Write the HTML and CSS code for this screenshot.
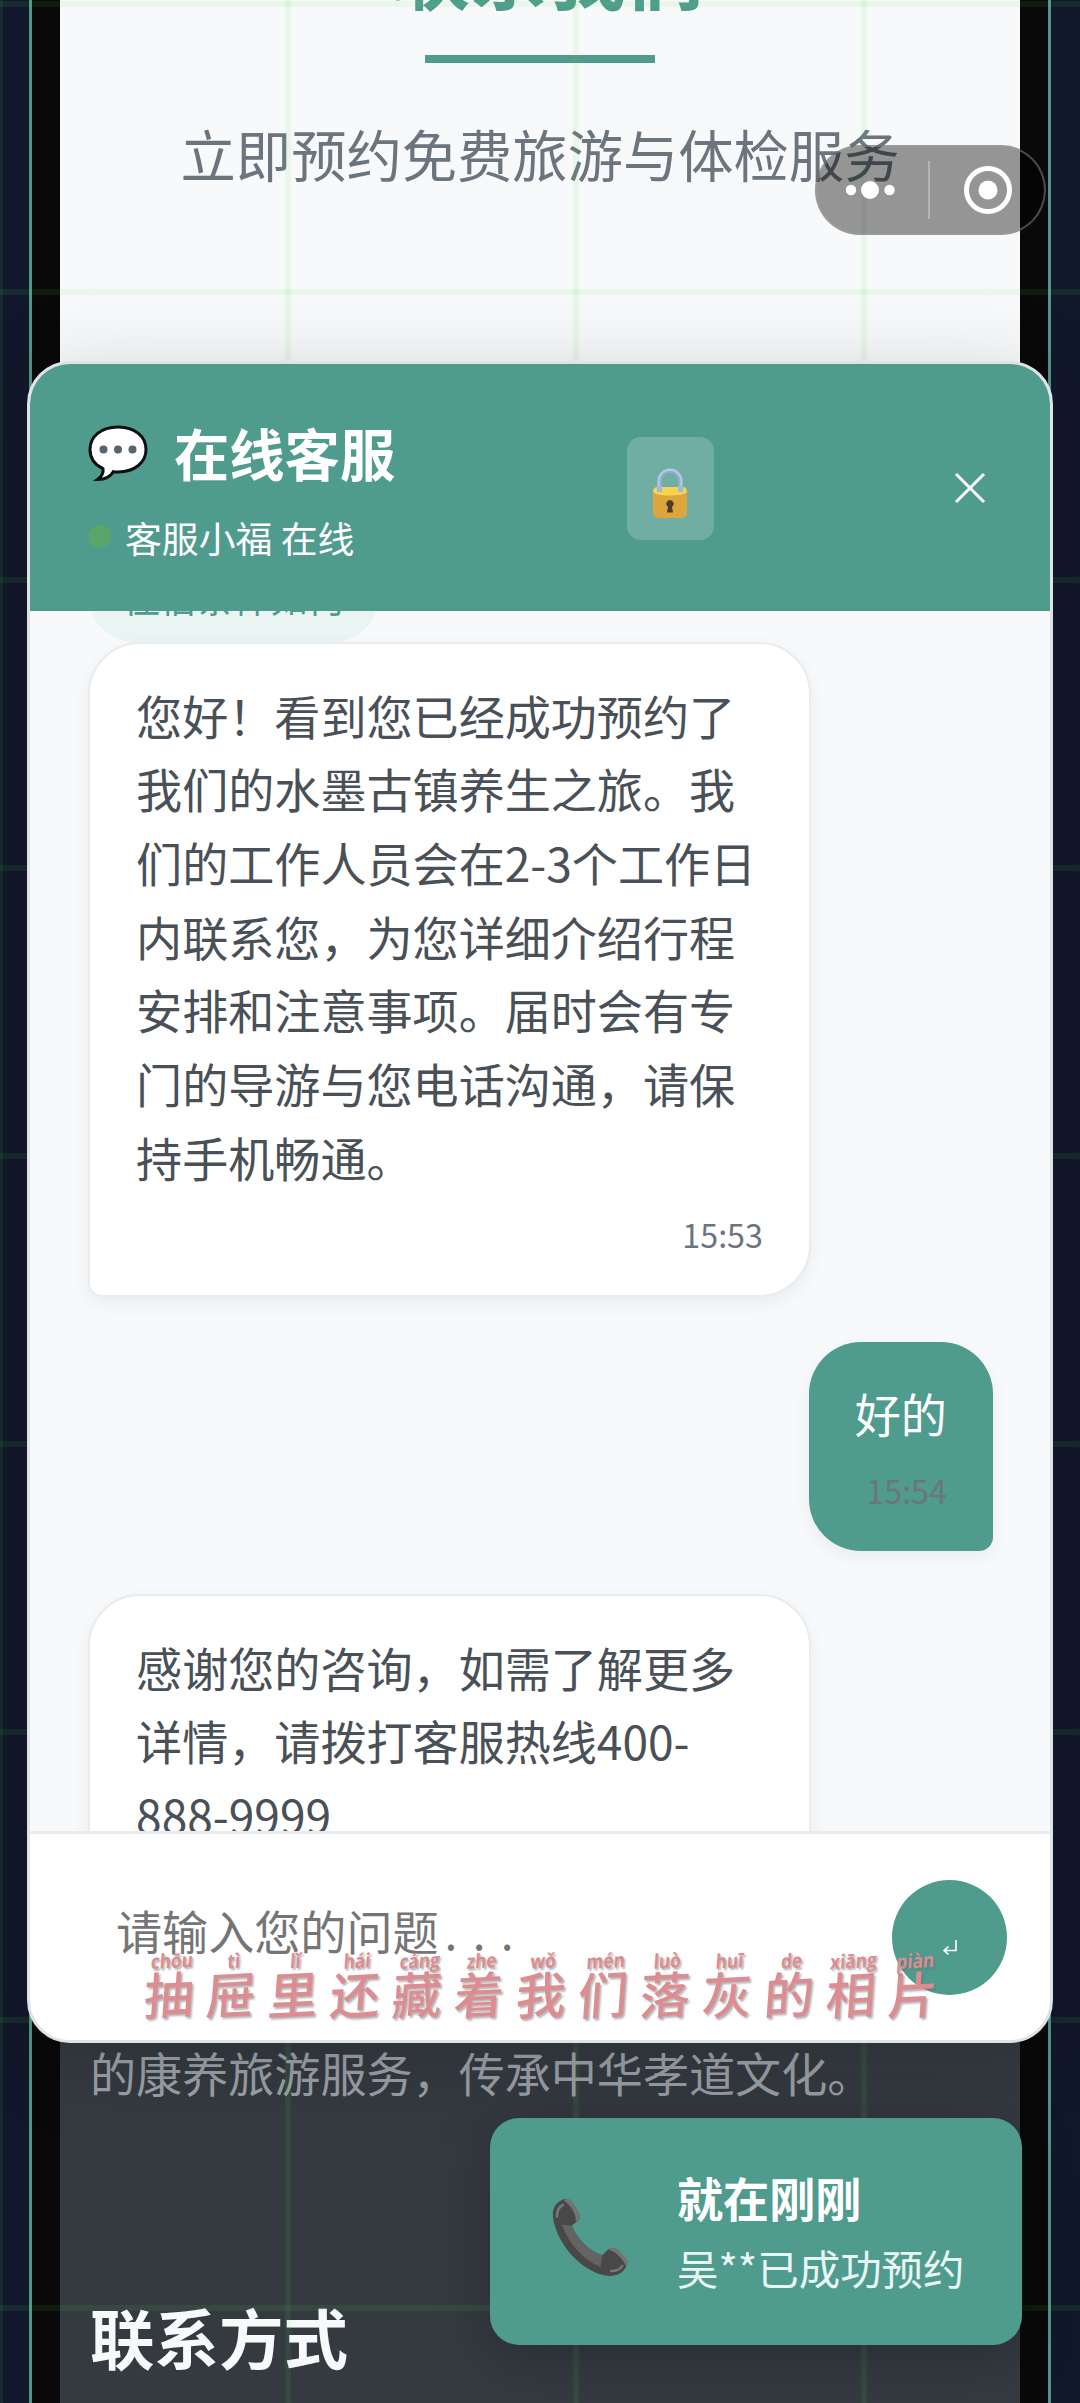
FILE: index.html
```html
<!DOCTYPE html>
<html lang="zh-CN">
<head>
<meta charset="utf-8">
<title>在线客服</title>
<link rel="stylesheet" href="styles.css">
</head>
<body>
<div class="page">
  <main class="content">
    <section class="contact">
      <h2 class="contact-title">联系我们</h2>
      <div class="contact-rule"></div>
      <p class="contact-sub">立即预约免费旅游与体检服务</p>
    </section>
    <footer class="footer">
      <p class="footer-text">的康养旅游服务，传承中华孝道文化。</p>
      <h3 class="footer-title">联系方式</h3>
    </footer>
  </main>
</div>
<div class="grid-lines"></div>

<section class="chat">
  <header class="chat-header">
    <div class="chat-info">
      <div class="chat-title">
        <svg class="icon-bubble" viewBox="0 0 60 58"><path d="M30 2C13 2 2 11.500 2 24.500c0 8.500 4.800 15.300 13 19.200.8 4.300-1.800 8.100-5.500 10.800 8.200-.2 13.200-3.200 15.800-7.800 1.500.2 3 .2 4.700.2C47 46.900 58 37.300 58 24.500 58 11.500 47 2 30 2z" fill="#fff" stroke="#0c0f10" stroke-width="3"/><circle cx="15.500" cy="24.500" r="4" fill="#58656d"/><circle cx="30" cy="24.500" r="4" fill="#58656d"/><circle cx="44.500" cy="24.500" r="4" fill="#58656d"/></svg>
        <span>在线客服</span>
      </div>
      <div class="chat-status"><i class="status-dot"></i><span>客服小福 在线</span></div>
    </div>
    <div class="lock-button">
      <svg class="icon-lock" viewBox="0 0 34 50"><path d="M6.500 24V13a10.500 10.500 0 0 1 21 0v11" fill="none" stroke="#8fb0cc" stroke-width="5"/><path d="M5.700 23V13a11.300 11.300 0 0 1 22.600 0v8" fill="none" stroke="#b3cde0" stroke-width="2"/><rect x="0" y="19" width="34" height="31" rx="5" fill="#dda63a"/><path d="M0 24q0-5 5-5h24q5 0 5 5-3 3.500-17 3.500T0 24z" fill="#f8d352"/><path d="M6.500 24v-6M27.500 24v-6" fill="none" stroke="#9dbbd2" stroke-width="5"/><path d="M17 32a3.700 3.700 0 0 1 2 6.800l1 5.700h-6l1-5.700a3.700 3.700 0 0 1 2-6.800z" fill="#4e3b2d"/></svg>
    </div>
    <svg class="icon-close" viewBox="0 0 32 32"><path d="M2 2l28 28M30 2L2 30" stroke="#fff" stroke-width="3" fill="none"/></svg>
  </header>
  <div class="chat-body">
    <div class="chip">住宿条件如何</div>
    <div class="message bot">
      <div>您好！看到您已经成功预约了我们的水墨古镇养生之旅。我们的工作人员会在2-3个工作日内联系您，为您详细介绍行程安排和注意事项。届时会有专门的导游与您电话沟通，请保持手机畅通。</div>
      <div class="time">15:53</div>
    </div>
    <div class="message user">
      <div>好的</div>
      <div class="time">15:54</div>
    </div>
    <div class="message bot">
      <div>感谢您的咨询，如需了解更多详情，请拨打客服热线400-<br>888-9999</div>
    </div>
  </div>
  <div class="chat-input">
    <div class="placeholder">请输入您的问题<span class="dots">...</span></div>
    <div class="send"><svg class="icon-enter" viewBox="0 0 16 16"><path d="M14 0v10.500H3M6.500 6.500L2 10.500l4.500 4" fill="none" stroke="#fff" stroke-width="1.600"/></svg></div>
  </div>
</section>

<div class="toast">
  <svg class="icon-phone" viewBox="0 0 78 78"><path d="M10 1C2 5-1 12 2 24c6 23 24 44 46 52 12 4 22 2 27-7 2-3 2-6 0-8l-8-9c-3-3-7-3-10-1l-6 6C38 53 26 41 20 27l5-4c3-2 4-5 2-9L20 3c-2-3-6-4-10-2z" fill="#484848"/><path d="M10 26c8 20 20 34 39 43l2-12C38 53 26 41 20 27z" fill="#646464"/><path d="M12 1c4-2 7-1 9 3l6 10c2 4 1 7-3 9 1-8-5-16-12-22zM75 69c3-4 2-7 0-9l-8-8c-3-3-6-3-10-1 8 3 15 9 18 18z" fill="#747474"/><path d="M5 18C5 12 7 8 11 6M60 73c6 0 9-2 11-5" stroke="#777" stroke-width="2.500" fill="none" stroke-linecap="round"/></svg>
  <div>
    <div class="toast-title">就在刚刚</div>
    <div class="toast-text">吴**已成功预约</div>
  </div>
</div>

<div class="capsule">
  <svg class="capsule-icons" viewBox="0 0 231 90"><g fill="#fff"><circle cx="36" cy="45" r="5.200"/><circle cx="55" cy="45" r="9"/><circle cx="74.500" cy="45" r="5.200"/><circle cx="173" cy="45" r="9.500"/></g><path d="M114 16v58" stroke="#b5b5b5" stroke-width="2"/><circle cx="173" cy="45" r="21.500" fill="none" stroke="#fff" stroke-width="5"/></svg>
</div>

<div class="lyrics">
  <span><b>chōu</b>抽</span><span><b>tì</b>屉</span><span><b>lǐ</b>里</span><span><b>hái</b>还</span><span><b>cáng</b>藏</span><span><b>zhe</b>着</span><span><b>wǒ</b>我</span><span><b>mén</b>们</span><span><b>luò</b>落</span><span><b>huī</b>灰</span><span><b>de</b>的</span><span><b>xiāng</b>相</span><span><b>piàn</b>片</span>
</div>
</body>
</html>
```
FILE: styles.css
```css
* { box-sizing: border-box; margin: 0; padding: 0; }
body {
  position: relative;
  width: 1080px;
  height: 2403px;
  overflow: hidden;
  background: #12182b;
  font-family: "Noto Sans CJK SC", sans-serif;
  font-size: 46.08px;
  line-height: 1.6;
}
svg { display: block; flex: none; }
.page {
  height: 2403px;
  margin: 0 29px;
  padding: 0 28px;
  background: #080908;
  border: solid #529488;
  border-width: 0 3px;
}
.content {
  display: flex;
  flex-direction: column;
  height: 100%;
  background: #f8f9fa;
}
.contact { height: 1900px; text-align: center; }
.contact-title {
  display: flex;
  align-items: flex-end;
  justify-content: center;
  height: 55px;
  padding: 0 0 26px 16px;
  font-size: 77.76px;
  font-weight: 700;
  line-height: 118px;
  color: #4f9b8e;
}
.contact-rule { width: 230px; height: 8px; margin: 0 auto; background: #4f9b8e; }
.contact-sub { margin-top: 46px; font-size: 55.3px; color: #6c757d; }
.footer { flex: 1; padding: 136px 29px 0 30px; background: #343a40; }
.footer-text { color: #9a9fa6; white-space: nowrap; }
.footer-title { margin-top: 175px; font-size: 64.5px; font-weight: 700; color: #f8f9fa; }
.grid-lines {
  position: absolute;
  inset: 0;
  background-image:
    linear-gradient(to bottom, rgba(90,215,90,.09) 6px, transparent 6px),
    linear-gradient(to right, rgba(90,215,90,.09) 6px, transparent 6px);
  background-size: 288px 288px;
  background-position: 0 1px, -3px 0;
}

.chat {
  position: absolute;
  left: 27px;
  top: 361px;
  width: 1026px;
  height: 1682px;
  display: flex;
  flex-direction: column;
  overflow: hidden;
  background: #fff;
  border: 3px solid #dfe3e6;
  border-radius: 43px;
  box-shadow: 0 14px 86px rgba(0,0,0,.17);
}
.chat-header {
  height: 247px;
  flex: none;
  display: flex;
  align-items: center;
  justify-content: space-between;
  padding: 1px 64px 0 58px;
  background: #4f9b8e;
  color: #fff;
}
.chat-info { width: 303px; }
.chat-title { display: flex; align-items: center; gap: 26px; width: 340px; font-size: 55.3px; font-weight: 700; line-height: 88px; white-space: nowrap; }
.chat-title span { margin-top: -2px; }
.icon-bubble { width: 60px; height: 58px; margin-top: 3px; }
.chat-status { display: flex; align-items: center; gap: 14px; font-size: 36.86px; line-height: 59px; margin-top: 12px; white-space: nowrap; }
.status-dot { width: 23px; height: 23px; border-radius: 50%; background: #5aa56c; margin-top: -1px; }
.lock-button {
  width: 87px;
  height: 103px;
  display: flex;
  justify-content: center;
  align-items: flex-end;
  margin-right: 5px;
  padding-bottom: 22px;
  border-radius: 14px;
  background: rgba(255,255,255,.19);
}
.icon-lock { width: 34px; height: 50px; }
.icon-close { width: 32px; height: 32px; }
.chat-body {
  flex: none;
  height: 1220px;
  padding: 0 57px 0 58px;
  display: flex;
  flex-direction: column;
  align-items: flex-start;
  overflow: hidden;
  background: #f8f9fa;
}
.chip {
  flex: none;
  height: 94px;
  margin-top: -63px;
  padding: 18px 35px;
  font-size: 36.86px;
  line-height: 62px;
  color: #4f9b8e;
  background: #eaf5f3;
  border-radius: 58px;
}
.message {
  flex: none;
  padding: 34.56px 46.08px;
  color: #495057;
  box-shadow: 0 6px 18px rgba(0,0,0,.06);
}
.bot {
  width: 723px;
  background: #fff;
  border: 2.88px solid #e9ecef;
  border-radius: 52px 52px 52px 14px;
}
.user {
  align-self: flex-end;
  margin: 45px 0 43px 0;
  color: #fff;
  background: #4f9b8e;
  border-radius: 52px 52px 14px 52px;
}
.time { margin-top: 14.4px; font-size: 32.26px; color: #6c757d; text-align: right; }
.chat-input {
  flex: 1;
  display: flex;
  align-items: center;
  justify-content: space-between;
  padding: 0 43px 0 86px;
  border-top: 3px solid #e9ecef;
}
.placeholder { margin-top: -13px; color: #757575; }
.dots { margin-left: 6px; letter-spacing: 15.3px; }
.send { width: 115px; height: 115px; border-radius: 50%; background: #4f9b8e; display: flex; justify-content: center; padding-top: 60px; }
.icon-enter { width: 16px; height: 16px; }

.toast {
  position: absolute;
  left: 490px;
  top: 2118px;
  width: 532px;
  height: 227px;
  display: flex;
  align-items: center;
  gap: 48px;
  padding: 0 0 2px 62px;
  border-radius: 29px;
  background: #4f9b8e;
  color: #fff;
  box-shadow: 0 12px 58px rgba(0,0,0,.22);
  white-space: nowrap;
}
.icon-phone { width: 77px; height: 77px; margin-top: 13px; }
.toast-title { font-weight: 700; line-height: 73px; }
.toast-text { font-size: 41.47px; line-height: 66px; color: #e8f7f4; }
.capsule {
  position: absolute;
  left: 815px;
  top: 145px;
  width: 231px;
  height: 90px;
  border-radius: 45px;
  background: rgba(0,0,0,.4);
  box-shadow: inset 0 0 0 2px rgba(160,160,160,.45);
}
.capsule-icons { width: 231px; height: 90px; }
.lyrics {
  position: absolute;
  left: 139px;
  top: 1950px;
  display: grid;
  grid-template-columns: repeat(13, 62px);
  font-size: 50px;
  font-weight: 500;
  line-height: 43px;
  color: #dc8d92;
  text-align: center;
  text-shadow: 2px 2px 2px rgba(110,110,110,.5);
}
.lyrics span { display: flex; flex-direction: column; align-items: center; transform: skew(-4deg, -3deg); }
.lyrics b { font-family: "Open Sans", "Noto Sans", sans-serif; font-size: 20px; font-weight: 700; line-height: 21px; height: 21px; transform: scaleX(.86); }
```
